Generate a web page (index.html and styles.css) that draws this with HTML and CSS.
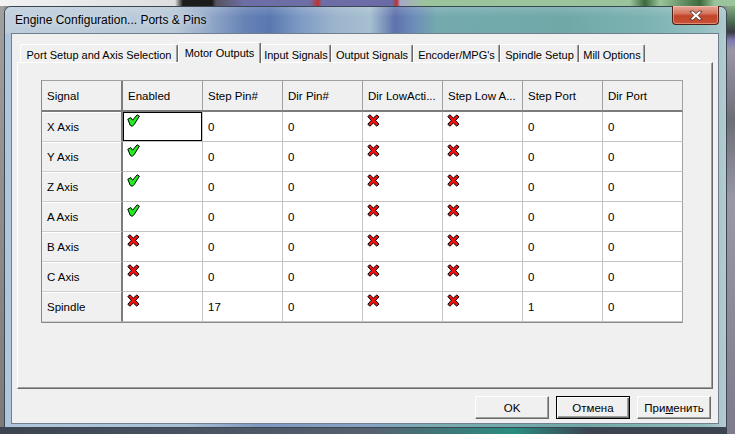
FILE: index.html
```html
<!DOCTYPE html>
<html>
<head>
<meta charset="utf-8">
<title>Engine Configuration... Ports &amp; Pins</title>
<link rel="stylesheet" href="styles.css">
</head>
<body>
<svg class="defs" aria-hidden="true">
  <symbol id="ok" viewBox="0 0 13 13">
    <path d="M0.8 5.2 L3.8 3.6 L5.6 6.2 L10.2 0.8 L12.4 2.2 L7.4 10.2 L5.2 12.4 L3.2 11.2 Z" fill="#22ee22" stroke="#000" stroke-width="1" stroke-linejoin="miter"/>
  </symbol>
  <symbol id="no" viewBox="0 0 13 13">
    <path d="M0.8 2.5 L3 0.8 L6.3 4 L9.8 1 L12 2.8 L8.6 6.4 L12 10.2 L9.8 12.2 L6.3 9 L3 12.2 L0.8 10.3 L4.2 6.4 Z" fill="#f01010" stroke="#000" stroke-width="1" stroke-linejoin="round"/>
  </symbol>
</svg>
<div class="desktop">
  <div class="window">
    <div class="titlebar">
      <div class="title">Engine Configuration... Ports &amp; Pins</div>
      <div class="close">
        <svg width="14" height="11" viewBox="0 0 14 11"><path d="M1 1.5 L3.8 0.8 L7 3.6 L10.2 0.8 L13 1.5 L9.2 5.5 L13 9.5 L10.2 10.2 L7 7.4 L3.8 10.2 L1 9.5 L4.8 5.5 Z" fill="#fff" stroke="#4a2a26" stroke-width="0.9" stroke-linejoin="round"/></svg>
      </div>
    </div>
    <div class="client">
      <div class="tabs">
        <div class="tab w1">Port Setup and Axis Selection</div>
        <div class="tab active w2">Motor Outputs</div>
        <div class="tab w3">Input Signals</div>
        <div class="tab w4">Output Signals</div>
        <div class="tab w5">Encoder/MPG's</div>
        <div class="tab w6">Spindle Setup</div>
        <div class="tab w7">Mill Options</div>
      </div>
      <div class="panel">
        <div class="grid">
          <div class="hc corner">Signal</div>
          <div class="hc">Enabled</div>
          <div class="hc">Step Pin#</div>
          <div class="hc">Dir Pin#</div>
          <div class="hc">Dir LowActi...</div>
          <div class="hc">Step Low A...</div>
          <div class="hc">Step Port</div>
          <div class="hc last">Dir Port</div>

          <div class="rh">X Axis</div>
          <div class="ic focus"><svg class="i"><use href="#ok"/></svg></div>
          <div>0</div><div>0</div>
          <div class="ic"><svg class="i"><use href="#no"/></svg></div>
          <div class="ic"><svg class="i"><use href="#no"/></svg></div>
          <div>0</div><div class="last">0</div>

          <div class="rh">Y Axis</div>
          <div class="ic"><svg class="i"><use href="#ok"/></svg></div>
          <div>0</div><div>0</div>
          <div class="ic"><svg class="i"><use href="#no"/></svg></div>
          <div class="ic"><svg class="i"><use href="#no"/></svg></div>
          <div>0</div><div class="last">0</div>

          <div class="rh">Z Axis</div>
          <div class="ic"><svg class="i"><use href="#ok"/></svg></div>
          <div>0</div><div>0</div>
          <div class="ic"><svg class="i"><use href="#no"/></svg></div>
          <div class="ic"><svg class="i"><use href="#no"/></svg></div>
          <div>0</div><div class="last">0</div>

          <div class="rh">A Axis</div>
          <div class="ic"><svg class="i"><use href="#ok"/></svg></div>
          <div>0</div><div>0</div>
          <div class="ic"><svg class="i"><use href="#no"/></svg></div>
          <div class="ic"><svg class="i"><use href="#no"/></svg></div>
          <div>0</div><div class="last">0</div>

          <div class="rh">B Axis</div>
          <div class="ic"><svg class="i"><use href="#no"/></svg></div>
          <div>0</div><div>0</div>
          <div class="ic"><svg class="i"><use href="#no"/></svg></div>
          <div class="ic"><svg class="i"><use href="#no"/></svg></div>
          <div>0</div><div class="last">0</div>

          <div class="rh">C Axis</div>
          <div class="ic"><svg class="i"><use href="#no"/></svg></div>
          <div>0</div><div>0</div>
          <div class="ic"><svg class="i"><use href="#no"/></svg></div>
          <div class="ic"><svg class="i"><use href="#no"/></svg></div>
          <div>0</div><div class="last">0</div>

          <div class="rh">Spindle</div>
          <div class="ic"><svg class="i"><use href="#no"/></svg></div>
          <div>17</div><div>0</div>
          <div class="ic"><svg class="i"><use href="#no"/></svg></div>
          <div class="ic"><svg class="i"><use href="#no"/></svg></div>
          <div>1</div><div class="last">0</div>
        </div>
      </div>
      <div class="buttons">
        <button class="btn">OK</button>
        <button class="btn default">Отмена</button>
        <button class="btn">При<u>м</u>енить</button>
      </div>
    </div>
  </div>
</div>
</body>
</html>
```
FILE: styles.css
```css
* { box-sizing: border-box; }
html, body { margin: 0; padding: 0; }
body {
  width: 735px;
  height: 434px;
  overflow: hidden;
  font-family: "Liberation Sans", Arial, sans-serif;
  color: #000;
  background: #8c8c8c;
}
.defs { display: block; width: 0; height: 0; overflow: hidden; }

.desktop {
  width: 735px;
  height: 434px;
  padding: 6px 0 0 4px;
  overflow: hidden;
  background:
    linear-gradient(90deg, #f2f2f2 0, #dedede 175px, #1c1c1c 183px, #1c1c1c 212px, #55555f 216px, #6e6ea6 245px, #6e6ea6 310px, #c03030 318px, #6e6ea6 322px, #6a6aa8 392px, #c03030 397px, #a8a8c8 400px, #9cc49c 425px, #9cc49c 630px, #3c6a3c 645px, #9cc49c 660px, #3c6a3c 700px, #9cc49c 715px) top left / 100% 6px no-repeat,
    linear-gradient(180deg, #9cc49c 0, #4a6a50 22px, #3a3a44 32px, #7a7ab0 40px, #9a96a6 50px, #6e6e78 120px, #9a98a6 200px, #7e7c8c 100%) top right / 8px 100% no-repeat,
    linear-gradient(90deg, #3c4452, #56606e 50%, #2a8c80 70%, #3c4452 80%) bottom left / 100% 7px no-repeat,
    linear-gradient(180deg, #a0a0a0, #7a7a7a) left / 4px 100% no-repeat,
    #8c8c8c;
}

.window {
  width: 723px;
  height: 422px;
  border: 1px solid #3c4650;
  border-radius: 7px 7px 0 0;
  padding: 0 7px 3px 6px;
  display: flex;
  flex-direction: column;
  background-color: #9fb6c8;
  background-image: linear-gradient(90deg, #b0c6dc 0%, #a8c0d6 25%, #7e98c0 35%, #86a2c4 50%, #78acb0 60%, #70a8a8 80%, #90bcbe 97%, #b4ccd2 100%);
}

.titlebar {
  height: 26px;
  margin: 0 -7px 0 -6px;
  padding: 0 7px 0 6px;
  display: flex;
  align-items: center;
  border-radius: 6px 6px 0 0;
  background-image:
    linear-gradient(180deg, rgba(255,255,255,0.15) 0, rgba(255,255,255,0) 10px),
    linear-gradient(90deg, #bfcedc 0, #b8c8d8 170px, #92a8c8 205px, #6682b6 240px, #5a78b0 265px, #7e9ac4 295px, #9cb4cc 330px, #a6c0d0 365px, #5e72ae 390px, #6e8eb8 410px, #74aaae 432px, #70a8a8 560px, #7cb2b2 640px, #96c0c2 700px, #b0cace 723px);
}
.title {
  flex: 1;
  font-size: 12px;
  padding-left: 4px;
  text-shadow: 0 0 6px rgba(255,255,255,0.8);
}
.close {
  align-self: flex-start;
  margin-top: -1px;
  width: 47px;
  height: 19px;
  border: 1px solid #4e2018;
  border-top: none;
  border-radius: 0 0 4px 4px;
  background: linear-gradient(180deg, #e6a898 0, #d67862 40%, #c2442a 55%, #c85236 100%);
  box-shadow: inset 0 0 0 1px rgba(255,210,200,0.45);
  display: flex;
  align-items: center;
  justify-content: center;
}
.close svg { display: block; }

.client {
  flex: 1;
  background: #f0f0f0;
  border: 1px solid #6f7f8e;
  padding: 8px 5px 4px 5px;
  display: flex;
  flex-direction: column;
}

.tabs {
  display: flex;
  align-items: flex-end;
  height: 20px;
  margin-left: 3px;
  position: relative;
  z-index: 1;
}
.tab {
  height: 18px;
  padding-top: 2px;
  border: 1px solid;
  border-color: #fff #696969 transparent #fff;
  border-bottom: none;
  border-radius: 2px 2px 0 0;
  box-shadow: inset -1px 0 #a0a0a0;
  background: #f0f0f0;
  font-size: 11px;
  white-space: nowrap;
  display: flex;
  align-items: center;
  justify-content: center;
}
.tab.active {
  height: 21px;
  margin-bottom: -1px;
  padding-top: 0;
}
.w1 { width: 158px; }
.w2 { width: 83px; }
.w3 { width: 70px; }
.w4 { width: 82px; }
.w5 { width: 87px; }
.w6 { width: 79px; }
.w7 { width: 66px; }

.panel {
  height: 327px;
  border: 1px solid;
  border-color: #fff #696969 #696969 #fff;
  box-shadow: inset -1px -1px #a0a0a0;
  padding: 17px 0 0 23px;
}

.grid {
  display: grid;
  grid-template-columns: 81px repeat(7, 80px);
  grid-template-rows: 31px repeat(7, 30px);
  width: 642px;
  border-top: 1px solid #a0a0a0;
  border-left: 1px solid #8a8a8a;
  border-bottom: 1px solid #8a8a8a;
}
.grid > div {
  background: #fff;
  border-right: 1px solid #c4c4c4;
  border-bottom: 1px solid #c4c4c4;
  font-size: 11.5px;
  padding-left: 5px;
  display: flex;
  align-items: center;
  white-space: nowrap;
  overflow: hidden;
}
.grid > .hc {
  background: #f0f0f0;
  border-right-color: #a0a0a0;
  border-bottom: 2px solid #7c7c7c;
}
.grid > .corner { border-right: 2px solid #7c7c7c; }
.grid > .rh {
  background: #f0f0f0;
  border-right: 2px solid #7c7c7c;
  border-bottom-color: #cfcfcf;
  box-shadow: inset 0 1px #fff;
}
.grid > .last { border-right-color: #a0a0a0; }
.grid > .ic {
  align-items: flex-start;
  padding-top: 2px;
  padding-left: 4px;
}
.grid > .focus { box-shadow: inset 0 0 0 1px #000; }
.i { width: 13px; height: 13px; display: block; }

.buttons {
  display: flex;
  justify-content: flex-end;
  gap: 7px;
  margin-top: 7px;
  padding-right: 2px;
}
.btn {
  width: 74px;
  height: 23px;
  margin: 0;
  padding: 0;
  font-family: "Liberation Sans", Arial, sans-serif;
  font-size: 11.5px;
  color: #000;
  background: #f0f0f0;
  border: 1px solid;
  border-color: #fff #696969 #696969 #fff;
  box-shadow: inset -1px -1px #a0a0a0;
  border-radius: 0;
  display: flex;
  align-items: center;
  justify-content: center;
}
.btn.default {
  border: 1px solid #000;
  box-shadow: inset 1px 1px #fff, inset -1px -1px #696969, inset -2px -2px #a0a0a0;
}
```
